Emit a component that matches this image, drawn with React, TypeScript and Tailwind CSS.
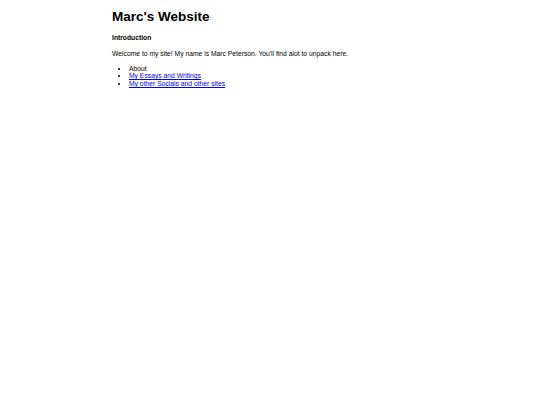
export default function App() {
  return (
    <div className="min-h-[405px] bg-white text-black font-['Liberation_Sans',Arial,sans-serif]">
      <div className="ml-[112px] pt-[7.5px]">
        <h1 className="text-[13.5px] leading-[17px] font-bold">Marc's Website</h1>
        <h4 className="mt-[8px] text-[6.75px] leading-[9px] font-bold">Introduction</h4>
        <p className="mt-[7px] text-[6.75px] leading-[9px]">
          Welcome to my site! My name is Marc Peterson. You'll find alot to unpack here.
        </p>
        <ul className="mt-[7.25px] pl-[17px] list-disc text-[6.75px] leading-[7.6px]">
          <li>About</li>
          <li>
            <a href="#" className="text-[#0000ee] underline">My Essays and Writings</a>
          </li>
          <li>
            <a href="#" className="text-[#0000ee] underline">My other Socials and other sites</a>
          </li>
        </ul>
      </div>
    </div>
  );
}
